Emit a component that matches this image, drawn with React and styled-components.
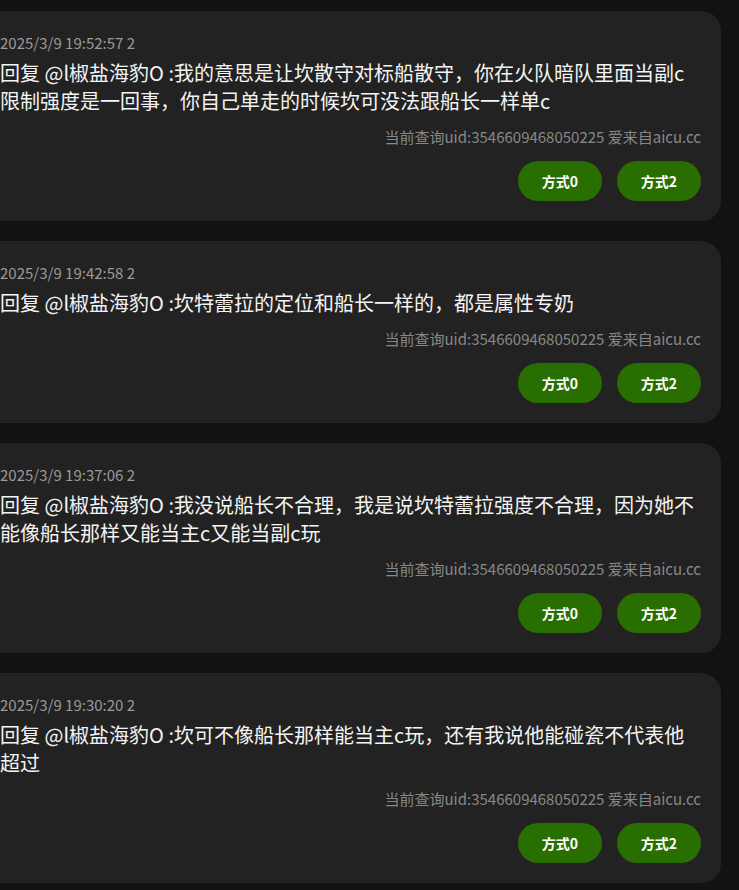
import React from "react"
import styled, { createGlobalStyle } from "styled-components"

const GlobalStyle = createGlobalStyle`
    html, body {
        margin: 0;
        padding: 0;
        background: #121212;
        overflow: hidden;
    }
    body {
        font-family: "Noto Sans CJK SC", "Noto Sans", sans-serif;
    }
`

const List = styled.div`
    width: 741px;
    margin-left: -20px;
    padding-top: 11px;
    display: flex;
    flex-direction: column;
    gap: 20px;
`

const Card = styled.div`
    background: #222222;
    border-radius: 20px;
    padding: 21px 20px 20px;
    display: flex;
    flex-direction: column;
`

const Meta = styled.div`
    color: #9a9a9a;
    font-size: 15px;
    line-height: 21px;
    margin-bottom: 6px;
`

const Content = styled.div`
    color: #f4f4f4;
    font-size: 20px;
    line-height: 28px;
    margin-bottom: 11px;
`

const Source = styled.div`
    color: #888888;
    font-size: 15px;
    line-height: 21px;
    text-align: right;
    margin-bottom: 14px;
`

const Actions = styled.div`
    display: flex;
    justify-content: flex-end;
    gap: 15px;
`

const Method = styled.button`
    width: 84px;
    height: 40px;
    border: none;
    border-radius: 20px;
    background: #296e00;
    color: #ffffff;
    font-family: inherit;
    font-size: 14px;
    font-weight: 700;
    cursor: pointer;
    padding: 0;
`

const replies = [
    {
        time: "2025/3/9 19:52:57 2",
        text: "回复 @l椒盐海豹O :我的意思是让坎散守对标船散守，你在火队暗队里面当副c限制强度是一回事，你自己单走的时候坎可没法跟船长一样单c",
    },
    {
        time: "2025/3/9 19:42:58 2",
        text: "回复 @l椒盐海豹O :坎特蕾拉的定位和船长一样的，都是属性专奶",
    },
    {
        time: "2025/3/9 19:37:06 2",
        text: "回复 @l椒盐海豹O :我没说船长不合理，我是说坎特蕾拉强度不合理，因为她不能像船长那样又能当主c又能当副c玩",
    },
    {
        time: "2025/3/9 19:30:20 2",
        text: "回复 @l椒盐海豹O :坎可不像船长那样能当主c玩，还有我说他能碰瓷不代表他超过",
    },
]

function App() {
    const cards = replies.map((reply) => (
        <Card key={reply.time}>
            <Meta>{reply.time}</Meta>
            <Content>{reply.text}</Content>
            <Source>当前查询uid:3546609468050225 爱来自aicu.cc</Source>
            <Actions>
                <Method>方式0</Method>
                <Method>方式2</Method>
            </Actions>
        </Card>
    ))

    return (
        <>
            <GlobalStyle />
            <List>{cards}</List>
        </>
    )
}

export default App
